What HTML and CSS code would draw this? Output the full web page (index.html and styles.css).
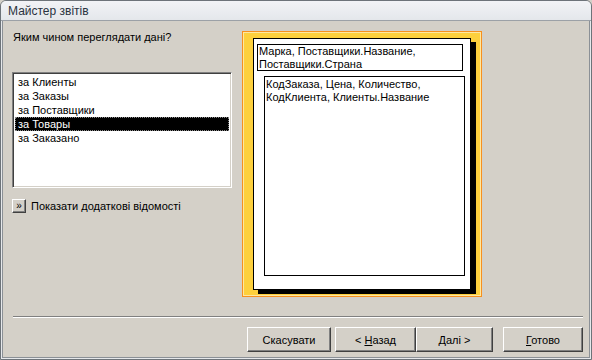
FILE: index.html
```html
<!DOCTYPE html>
<html lang="uk">
<head>
    <meta charset="UTF-8">
    <title>Майстер звітів</title>
    <link rel="stylesheet" href="styles.css">
</head>
<body>
    <div class="window">
        <div class="titlebar">Майстер звітів</div>

        <div class="body">
            <div class="main">
                <div class="left">
                    <p class="question">Яким чином переглядати дані?</p>

                    <ul class="listbox">
                        <li>за Клиенты</li>
                        <li>за Заказы</li>
                        <li>за Поставщики</li>
                        <li class="selected">за Товары</li>
                        <li>за Заказано</li>
                    </ul>

                    <div class="more">
                        <span class="more-btn">&raquo;</span>
                        <span>Показати додаткові відомості</span>
                    </div>
                </div>

                <div class="preview">
                    <div class="page">
                        <div class="group-box">Марка, Поставщики.Название, Поставщики.Страна</div>
                        <div class="detail-box">КодЗаказа, Цена, Количество, КодКлиента, Клиенты.Название</div>
                    </div>
                </div>
            </div>

            <div class="footer">
                <div class="separator"></div>
                <div class="buttons">
                    <button class="btn btn-cancel">Скасувати</button>
                    <button class="btn btn-back">&lt; <u>Н</u>азад</button>
                    <button class="btn btn-next"><u>Д</u>алі &gt;</button>
                    <button class="btn btn-finish"><u>Г</u>отово</button>
                </div>
            </div>
        </div>
    </div>
</body>
</html>
```

FILE: styles.css
```css
* {
    margin: 0;
    padding: 0;
    box-sizing: border-box;
}

body {
    background: #d4d0c8;
    font-family: "Liberation Sans", Arial, sans-serif;
    font-size: 11px;
    color: #000;
}

.window {
    width: 592px;
    height: 360px;
    border: 1px solid #6d7379;
    border-radius: 6px 6px 0 0;
    display: flex;
    flex-direction: column;
    overflow: hidden;
    background: #d4d0c8;
}

.titlebar {
    height: 20px;
    line-height: 21px;
    padding-left: 7px;
    font-size: 12px;
    color: #2a3340;
    background: linear-gradient(#f2f3f6, #e4e7eb);
    border-bottom: 1px solid #9ca1a7;
}

.body {
    flex: 1;
    display: flex;
    flex-direction: column;
    box-shadow: inset 1px -1px 0 #e6e8eb, inset -1px -1px 0 #e6e8eb,
                inset 2px -2px 0 #8b9096, inset -2px -2px 0 #8b9096;
}

.main {
    flex: 1;
    display: flex;
    padding: 10px 0 0 11px;
}

.left {
    width: 220px;
    margin-right: 10px;
}

.question {
    line-height: 13px;
    padding-left: 1px;
    margin-bottom: 28px;
}

/* list box */
.listbox {
    list-style: none;
    height: 116px;
    background: #fff;
    border: 1px solid;
    border-color: #808080 #fff #fff #808080;
    box-shadow: inset 1px 1px 0 #404040, inset -1px -1px 0 #d4d0c8;
    padding: 2px 2px;
}

.listbox li {
    height: 14px;
    line-height: 14px;
    padding-left: 3px;
}

.listbox li.selected {
    background: #000;
    color: #fff;
    outline: 1px dotted #888;
    outline-offset: -1px;
}

.more {
    display: flex;
    align-items: center;
    gap: 5px;
    margin-top: 11px;
}

.more-btn {
    width: 14px;
    height: 14px;
    font-size: 10px;
    line-height: 11px;
    text-align: center;
    background: #d4d0c8;
    border: 1px solid;
    border-color: #fff #404040 #404040 #fff;
    box-shadow: inset -1px -1px 0 #808080;
}

/* report preview */
.preview {
    width: 240px;
    height: 266px;
    border: 1px solid #f7901e;
    box-shadow: inset 0 0 0 1px #ffe7a0;
    background: #fdd03d;
    padding: 6px 0 0 10px;
}

.page {
    width: 218px;
    height: 252px;
    background: #fff;
    border: 1px solid #000;
    box-shadow: 5px 4px 0 #000;
    padding: 5px 0 0 3px;
}

.group-box {
    width: 206px;
    height: 27px;
    border: 1px solid #000;
    line-height: 13px;
    padding-left: 1px;
}

.detail-box {
    width: 201px;
    height: 200px;
    margin: 5px 0 0 7px;
    border: 1px solid #000;
    line-height: 13px;
    padding: 1px 0 0 1px;
}

/* footer */
.footer {
    padding: 0 8px 7px 12px;
}

.separator {
    height: 2px;
    border-top: 1px solid #808080;
    border-bottom: 1px solid #fff;
}

.buttons {
    display: flex;
    justify-content: flex-end;
    margin-top: 9px;
}

.btn {
    height: 25px;
    font-family: "Liberation Sans", Arial, sans-serif;
    font-size: 11px;
    color: #000;
    background: #d4d0c8;
    border: 1px solid;
    border-color: #fff #404040 #404040 #fff;
    box-shadow: inset -1px -1px 0 #808080;
}

.btn-cancel {
    width: 84px;
    margin-right: 4px;
}

.btn-back {
    width: 81px;
}

.btn-next {
    width: 77px;
    margin-right: 10px;
}

.btn-finish {
    width: 80px;
}
```
